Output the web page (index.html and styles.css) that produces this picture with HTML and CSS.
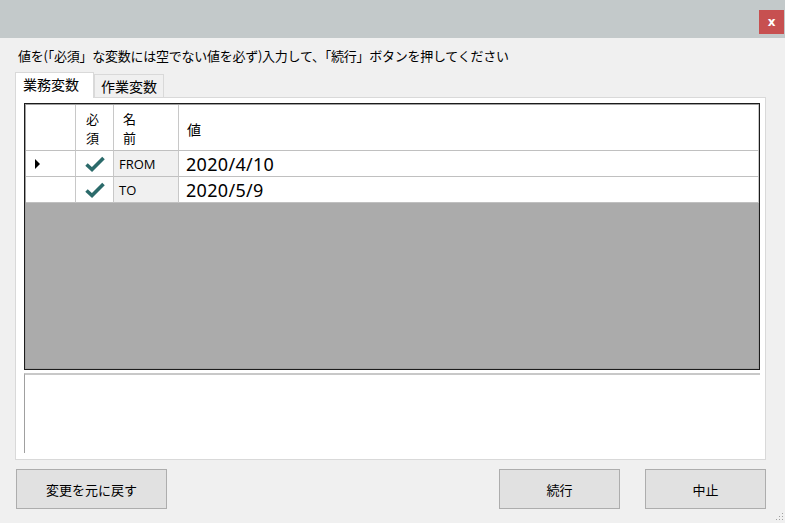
FILE: index.html
```html
<!DOCTYPE html>
<html lang="ja">
<head>
    <meta charset="UTF-8">
    <title>変数入力</title>
    <link rel="stylesheet" href="styles.css">
</head>
<body>
    <div class="window">
        <div class="titlebar">
            <button type="button" class="close-btn">x</button>
        </div>

        <div class="content">
            <div class="prompt">値を(「必須」な変数には空でない値を必ず)入力して、「続行」ボタンを押してください</div>

            <div class="tabs">
                <div class="tab active">業務変数</div>
                <div class="tab">作業変数</div>
            </div>

            <div class="tab-panel">
                <div class="grid">
                    <div class="grid-row header">
                        <div class="cell row-head"></div>
                        <div class="cell col-req"><span class="stack">必<br>須</span></div>
                        <div class="cell col-name"><span class="stack">名<br>前</span></div>
                        <div class="cell col-value">値</div>
                    </div>
                    <div class="grid-row">
                        <div class="cell row-head"><span class="current"></span></div>
                        <div class="cell col-req">
                            <svg class="tick" viewBox="0 0 20 16" width="20" height="16"><path d="M1.5 8.5 L7 13.5 L18.5 2" fill="none" stroke="#2b6a6a" stroke-width="3.6"/></svg>
                        </div>
                        <div class="cell col-name readonly">FROM</div>
                        <div class="cell col-value value">2020/4/10</div>
                    </div>
                    <div class="grid-row">
                        <div class="cell row-head"></div>
                        <div class="cell col-req">
                            <svg class="tick" viewBox="0 0 20 16" width="20" height="16"><path d="M1.5 8.5 L7 13.5 L18.5 2" fill="none" stroke="#2b6a6a" stroke-width="3.6"/></svg>
                        </div>
                        <div class="cell col-name readonly">TO</div>
                        <div class="cell col-value value">2020/5/9</div>
                    </div>
                </div>
                <div class="notes"></div>
            </div>

            <div class="actions">
                <button type="button" class="btn">変更を元に戻す</button>
                <div class="spacer"></div>
                <button type="button" class="btn btn-small">続行</button>
                <button type="button" class="btn btn-small">中止</button>
            </div>
        </div>
        <div class="grip"></div>
    </div>
</body>
</html>
```

FILE: styles.css
```css
* {
    box-sizing: border-box;
}

body {
    margin: 0;
    font-family: "Noto Sans CJK JP", "Noto Sans", sans-serif;
    font-size: 12px;
    color: #000;
    background-color: #f0f0f0;
}

.window {
    position: relative;
    width: 785px;
    height: 523px;
    background-color: #f0f0f0;
}

.titlebar {
    height: 38px;
    background-color: #c3c9ca;
    display: flex;
    justify-content: flex-end;
    align-items: flex-start;
    padding: 10px 1px 0 0;
}

.close-btn {
    width: 25px;
    height: 24px;
    border: none;
    background-color: #c75050;
    color: #fff;
    font-family: "DejaVu Sans", sans-serif;
    font-weight: bold;
    font-size: 12px;
    line-height: 22px;
    padding: 0;
}

.content {
    padding: 8px 0 0 15px;
}

.prompt {
    padding-left: 3px;
    height: 25px;
    line-height: 20px;
    font-size: 13px;
    letter-spacing: -0.25px;
    white-space: nowrap;
}

.tabs {
    display: flex;
    align-items: flex-end;
    height: 26px;
}

.tab {
    height: 23px;
    padding: 0 6px;
    line-height: 22px;
    font-size: 14px;
    border: 1px solid #d9d9d9;
    border-bottom: none;
    background-color: #f0f0f0;
}

.tab.active {
    height: 26px;
    width: 79px;
    padding: 0 0 0 7px;
    line-height: 22px;
    background-color: #fff;
    position: relative;
    top: 1px;
}

.tab-panel {
    width: 751px;
    height: 363px;
    background-color: #fff;
    border: 1px solid #d9d9d9;
    padding: 5px 0 0 8px;
}

.grid {
    width: 736px;
    height: 267px;
    border: 1px solid #1c1c1c;
    box-shadow: inset 0 0 0 1px #a0a0a0;
    background-color: #ababab;
    padding: 1px;
}

.grid-row {
    display: grid;
    grid-template-columns: 50px 38px 65px 580px;
    height: 26px;
}

.grid-row.header {
    height: 46px;
}

.cell {
    background-color: #fff;
    border-right: 1px solid #c8c8c8;
    border-bottom: 1px solid #c0c0c0;
    display: flex;
    align-items: center;
    overflow: hidden;
}

.header .cell {
    font-size: 13px;
}

.stack {
    display: block;
    line-height: 19px;
}

.header .col-req {
    justify-content: flex-start;
    padding-left: 10px;
}

.header .col-name {
    padding-left: 9px;
}

.header .col-value {
    padding-left: 8px;
    padding-top: 2px;
    font-size: 14px;
}

.row-head {
    padding-left: 9px;
}

.current {
    width: 0;
    height: 0;
    border-top: 5px solid transparent;
    border-bottom: 5px solid transparent;
    border-left: 5px solid #000;
}

.col-req {
    justify-content: center;
}

.tick {
    margin-left: 1px;
}

.readonly {
    background-color: #f0f0f0;
    font-family: "Open Sans", "Noto Sans", sans-serif;
    font-size: 13px;
    padding-left: 5px;
}

.value {
    font-family: "Noto Sans", sans-serif;
    font-size: 18px;
    padding-left: 7px;
    letter-spacing: 0.3px;
}

.notes {
    width: 736px;
    height: 80px;
    margin-top: 3px;
    border-top: 2px solid #c8c8c8;
    border-left: 1px solid #a0a0a0;
    background-color: #fff;
}

.actions {
    display: flex;
    gap: 25px;
    margin-top: 9px;
    padding-left: 1px;
    width: 751px;
}

.spacer {
    flex: 1;
}

.btn {
    height: 40px;
    width: 151px;
    background-color: #e1e1e1;
    border: 1px solid #adadad;
    font-family: "Noto Sans CJK JP", sans-serif;
    font-size: 13px;
    color: #000;
    padding: 0;
}

.btn-small {
    width: 121px;
}

.grip {
    position: absolute;
    right: 2px;
    bottom: 3px;
    width: 8px;
    height: 8px;
    background-image: radial-gradient(#a0a0a0 40%, transparent 45%);
    background-size: 3px 3px;
    clip-path: polygon(100% 0, 100% 100%, 0 100%);
}
```
